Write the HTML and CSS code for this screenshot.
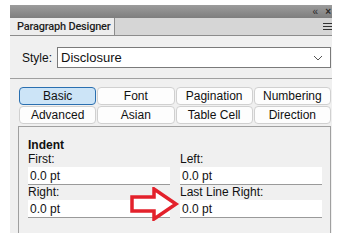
FILE: index.html
```html
<!DOCTYPE html>
<html>
<head>
    <link rel="stylesheet" href="styles.css">
</head>
<body>
    <div class="panel">
        <div class="titlebar">
            <span class="collapse">&laquo;</span>
            <span class="close">&times;</span>
        </div>
        <div class="tabbar">
            <div class="tab">Paragraph Designer</div>
            <div class="menu-icon"><span></span><span></span><span></span></div>
        </div>

        <div class="style-row">
            <label>Style:</label>
            <div class="select">
                <span>Disclosure</span>
                <svg width="10" height="6" viewBox="0 0 10 6"><path d="M1 1 L5 5 L9 1" fill="none" stroke="#555" stroke-width="1"/></svg>
            </div>
        </div>

        <hr class="separator">

        <div class="tabs">
            <button class="tab-btn active">Basic</button>
            <button class="tab-btn">Font</button>
            <button class="tab-btn">Pagination</button>
            <button class="tab-btn">Numbering</button>
            <button class="tab-btn">Advanced</button>
            <button class="tab-btn">Asian</button>
            <button class="tab-btn">Table Cell</button>
            <button class="tab-btn">Direction</button>
        </div>

        <div class="group">
            <div class="group-title">Indent</div>
            <div class="fields">
                <div class="field">
                    <label>First:</label>
                    <div class="input">0.0 pt</div>
                </div>
                <div class="field">
                    <label>Left:</label>
                    <div class="input">0.0 pt</div>
                </div>
                <div class="field">
                    <label>Right:</label>
                    <div class="input">0.0 pt</div>
                </div>
                <div class="field">
                    <label>Last Line Right:</label>
                    <div class="input">0.0 pt</div>
                </div>
            </div>
            <!-- callout arrow over the form -->
            <svg class="arrow" width="50" height="34" viewBox="0 0 50 34">
                <path d="M2 10 L24 10 L24 2 L46 17 L24 32 L24 24 L2 24 Z" fill="#fff" stroke="#e3212b" stroke-width="3.5" stroke-linejoin="miter"/>
            </svg>
        </div>
    </div>
</body>
</html>
```

FILE: styles.css
```css
body {
    margin: 0;
    background: #fff;
    font-family: 'Liberation Sans', Arial, sans-serif;
    font-size: 12px;
    color: #111;
}

.panel {
    margin: 5px 0 0 10px;
    width: 322px;
    height: 228px;
    background: #f0f0f0;
    overflow: hidden;
}

.titlebar {
    height: 13px;
    background: linear-gradient(#9c9c9c, #7e7e7e);
    display: flex;
    justify-content: flex-end;
    align-items: center;
    gap: 7px;
    padding-right: 1px;
    color: #2a2a2a;
    font-size: 10px;
    line-height: 13px;
}

.close {
    font-weight: bold;
}

.tabbar {
    height: 17px;
    background: #d6d6d6;
    border-bottom: 1px solid #8c8c8c;
    display: flex;
    justify-content: space-between;
}

.tab {
    background: #ededed;
    border-right: 1px solid #8c8c8c;
    padding: 0 0 0 7px;
    font-family: Roboto, sans-serif;
    font-weight: 500;
    font-size: 11px;
    letter-spacing: -0.2px;
    line-height: 18px;
    color: #1e1e1e;
    width: 97px;
    white-space: nowrap;
    overflow: hidden;
}

.menu-icon {
    display: flex;
    flex-direction: column;
    justify-content: center;
    gap: 2px;
    width: 9px;
}

.menu-icon span {
    height: 1px;
    background: #333;
}

.style-row {
    display: flex;
    align-items: center;
    padding: 11px 1px 0 12px;
    gap: 5px;
}

.select {
    flex: 1;
    height: 19px;
    background: #fff;
    border: 1px solid #7a7a7a;
    display: flex;
    align-items: center;
    justify-content: space-between;
    padding: 0 7px 0 3px;
    font-size: 13px;
}

.separator {
    border: none;
    border-top: 1px solid #a0a0a0;
    margin: 10px 0 0 0;
}

.tabs {
    display: grid;
    grid-template-columns: repeat(4, 1fr);
    gap: 1px 1px;
    padding: 8px 1px 0 9px;
}

.tab-btn {
    height: 18px;
    font-family: inherit;
    font-size: 12px;
    color: #111;
    background: #fdfdfd;
    border: 1px solid #d0d0d0;
    border-radius: 4px;
    padding: 0;
}

.tab-btn.active {
    background: #cce4f7;
    border-color: #2a6fb0;
}

.group {
    position: relative;
    margin: 2px 1px 0 8px;
    border: 1px solid #a0a0a0;
    border-bottom: none;
    height: 120px;
    padding: 11px 9px 0 9px;
}

.group-title {
    font-weight: bold;
    font-size: 12px;
    line-height: 14px;
}

.fields {
    display: grid;
    grid-template-columns: 142px 142px;
    column-gap: 10px;
}

.field label {
    display: block;
    line-height: 14px;
}

.input {
    height: 17px;
    margin-top: 1px;
    background: #fff;
    border-bottom: 1px solid #9a9a9a;
    padding-left: 2px;
    line-height: 18px;
}

.arrow {
    position: absolute;
    left: 111px;
    top: 60px;
}
```
